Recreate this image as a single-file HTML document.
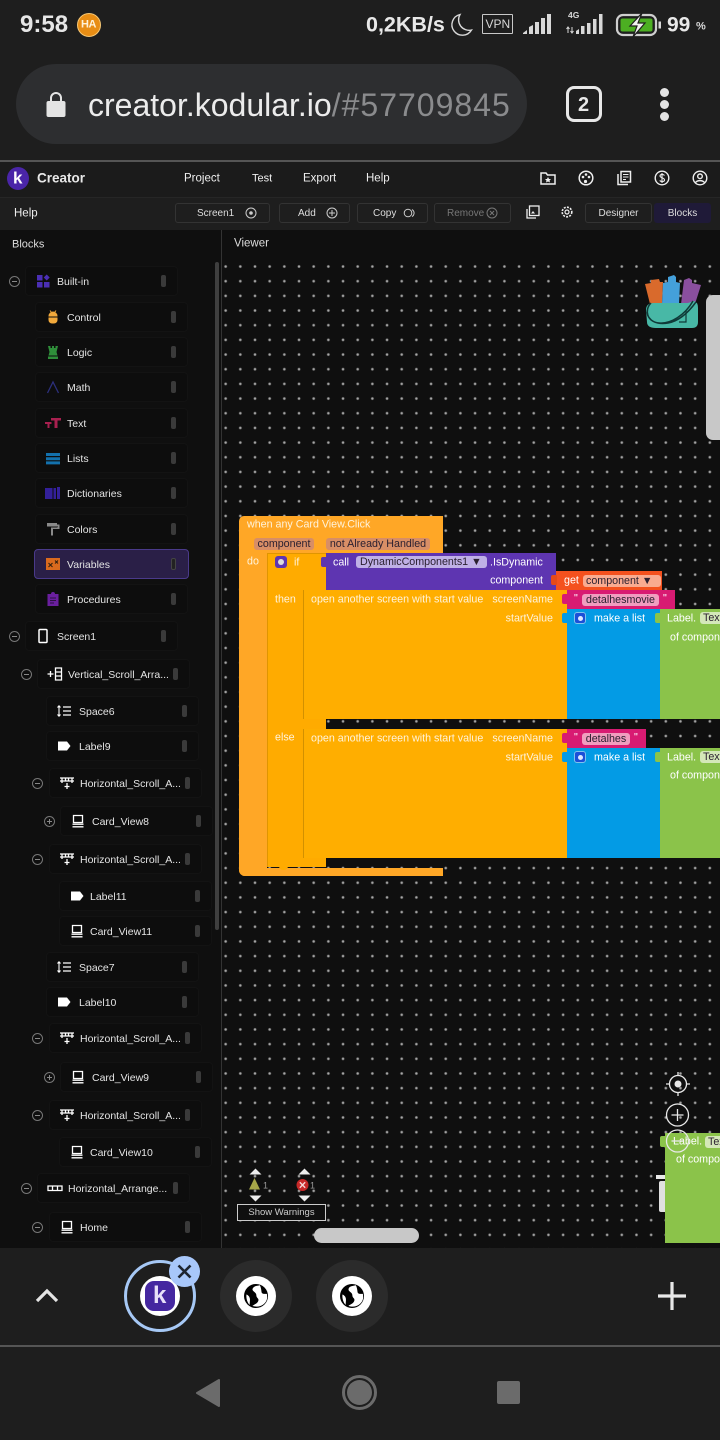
<!DOCTYPE html>
<html><head><meta charset="utf-8">
<style>
html,body{margin:0;padding:0;background:#1e1e1e}
#p{position:relative;width:720px;height:1440px;overflow:hidden;background:#1e1e1e;font-family:"Liberation Sans",sans-serif;color:#eee}
#p div,#p svg,#p span.a{position:absolute}
.t{white-space:nowrap;transform:translateY(-50%);line-height:1}
.m{margin-top:1px}
.r{height:30px;box-sizing:border-box;border:1px solid #131313;border-radius:4px;background:#0d0d0d;width:153px}
.r .n{position:absolute;left:31px;top:15px;transform:translateY(-50%);font-size:10.5px;color:#e4e4e4;white-space:nowrap;line-height:1}
.r .h{position:absolute;left:135px;top:8px;width:5px;height:12px;border-radius:2px;background:#3a3a3a}
.r svg{left:9px;top:6px;width:16px;height:16px}
.tg{width:11px;height:11px;box-sizing:border-box;border:1px solid #777;border-radius:50%}
.tg:before{content:"";position:absolute;left:2px;top:4px;width:5px;height:1px;background:#888}
.tg.pl:after{content:"";position:absolute;left:4px;top:2px;width:1px;height:5px;background:#888}
.bt{top:203px;height:20px;box-sizing:border-box;border:1px solid #333;border-radius:3px;font-size:10px;color:#ddd;line-height:20px}
.k{font-size:10.7px;color:#fff3dc;margin-top:1px}
.w{font-size:10.7px;color:#fff;margin-top:1px}
.f{height:12px;border-radius:3px;font-size:10.7px;line-height:12px;color:#2b2030;white-space:nowrap;overflow:hidden;text-align:center}
</style></head><body><div id="p">
<svg width="0" height="0" style="position:absolute"><defs>
<symbol id="lab" viewBox="0 0 16 16"><path d="M2 3.500h9l3.500 4.500-3.500 4.500H2z" fill="#fff"/></symbol>
<symbol id="card" viewBox="0 0 16 16"><path d="M3.500 2.500h9v7h-9z" fill="none" stroke="#fff" stroke-width="1.300"/><path d="M2.500 11.200h11M2.500 13.800h11" stroke="#fff" stroke-width="1.300"/></symbol>
<symbol id="hs" viewBox="0 0 16 16"><path d="M1 3h14M1 6h14M3 3v5M6.500 3v3M9.500 3v3M13 3v5" stroke="#fff" stroke-width="1.300" fill="none"/><path d="M8 8v6M5.500 11.500h5" stroke="#fff" stroke-width="1.300"/></symbol>
<symbol id="sp" viewBox="0 0 16 16"><path d="M3 3v10M1.500 4.500L3 2.800l1.500 1.700M1.500 11.500L3 13.200l1.500-1.700" stroke="#fff" stroke-width="1.100" fill="none"/><path d="M7 4h8M7 8h8M7 12h8" stroke="#fff" stroke-width="1.300"/></symbol>
</defs></svg>

<!-- status bar -->
<div class="t" style="left:20px;top:25px;font-size:24px;font-weight:bold;color:#e6e6e6">9:58</div>
<div style="left:77px;top:13px;width:24px;height:24px;border-radius:50%;background:#e88d14;border:1px solid #f6c774;box-sizing:border-box"></div>
<div class="t" style="left:81px;top:25px;font-size:11px;font-weight:bold;color:#fff2d8;letter-spacing:-.5px">HA</div>
<div class="t" style="left:366px;top:25px;font-size:21.5px;font-weight:bold;color:#e8e8e8">0,2KB/s</div>
<svg style="left:448px;top:12px" width="26" height="26" viewBox="0 0 26 26"><path d="M12 2.500A10.500 10.500 0 1 0 23.500 18 10.500 10.500 0 0 1 12 2.500z" fill="none" stroke="#d8d8d8" stroke-width="1.400"/></svg>
<div style="left:482px;top:14px;width:31px;height:20px;box-sizing:border-box;border:1.500px solid #c8c8c8;border-radius:1px"></div>
<div class="t" style="left:485.500px;top:24px;font-size:12px;color:#d8d8d8">VPN</div>
<svg style="left:522px;top:13px" width="30" height="22" viewBox="0 0 30 22"><path d="M1 20l4-3v4H1zM7 14l4-2v9H7zM13 9h4v12h-4zM19 5h4v16h-4zM25 1h4v20h-4z" fill="#d8d8d8"/></svg>
<div class="t" style="left:568px;top:15px;font-size:8.5px;font-weight:bold;color:#d8d8d8">4G</div>
<svg style="left:566px;top:13px" width="40" height="22" viewBox="0 0 40 22"><path d="M2 14v6M6 14v6M0.500 16L2 14l1.500 2M4.500 18L6 20l1.500-2" stroke="#d8d8d8" fill="none"/><path d="M10 21v-3l3-2v5zM15 21v-8h3.500v8zM21 21V10h3.500v11zM27 21V6h3.500v15zM33 21V1h3.500v20z" fill="#d8d8d8"/></svg>
<svg style="left:615px;top:13px" width="48" height="24" viewBox="0 0 48 24"><rect x="2" y="2" width="39" height="20" rx="6" fill="none" stroke="#cfcfcf" stroke-width="2.200"/><rect x="5.500" y="5.500" width="32" height="13" rx="2" fill="#4caf22"/><rect x="43.500" y="8.500" width="2.500" height="7" fill="#d8d8d8"/><path d="M27 0L15 13h7l-4 11 12-14h-7z" fill="#f2f2f2" stroke="#1e1e1e" stroke-width="1.200"/></svg>
<div class="t" style="left:667px;top:25px;font-size:21px;font-weight:bold;color:#e8e8e8">99</div>
<div class="t" style="left:696px;top:27px;font-size:11px;font-weight:bold;color:#d8d8d8">%</div>

<!-- url bar -->
<div style="left:16px;top:64px;width:511px;height:80px;border-radius:40px;background:#2d2e30"></div>
<svg style="left:44px;top:90px" width="24" height="28" viewBox="0 0 24 28"><path d="M7 13V8a5 5 0 0 1 10 0v5" fill="none" stroke="#e4e4e4" stroke-width="2"/><rect x="2.500" y="11" width="19" height="16" rx="2" fill="#e4e4e4"/></svg>
<div class="t" style="left:88px;top:105px;width:423px;overflow:hidden;font-size:32px;line-height:38px;color:#ececec">creator.kodular.io<span style="color:#8a8b8d;letter-spacing:1px">/#577098457</span></div>
<div style="left:566px;top:86px;width:36px;height:36px;box-sizing:border-box;border:3.5px solid #e8e8e8;border-radius:8px"></div>
<div class="t" style="left:578px;top:105px;font-size:20px;font-weight:bold;color:#e8e8e8">2</div>
<div style="left:659.500px;top:88px;width:9px;height:9px;border-radius:50%;background:#e4e4e4"></div>
<div style="left:659.500px;top:100px;width:9px;height:9px;border-radius:50%;background:#e4e4e4"></div>
<div style="left:659.500px;top:112px;width:9px;height:9px;border-radius:50%;background:#e4e4e4"></div>

<!-- kodular header -->
<div style="left:0;top:160px;width:720px;height:2px;background:#555"></div>
<div style="left:0;top:162px;width:720px;height:35px;background:#1b1b1b"></div>
<div style="left:7px;top:167px;width:22px;height:23px;border-radius:50%;background:#4a25a8"></div>
<div class="t" style="left:13px;top:178px;font-size:17px;font-weight:bold;color:#fff">k</div>
<div class="t" style="left:37px;top:178px;font-size:13.5px;font-weight:bold;color:#e8e8e8">Creator</div>
<div class="t m" style="left:184px;top:178px;font-size:11.5px">Project</div>
<div class="t m" style="left:252px;top:178px;font-size:11px">Test</div>
<div class="t m" style="left:303px;top:178px;font-size:11.5px">Export</div>
<div class="t m" style="left:366px;top:178px;font-size:11.5px">Help</div>
<svg style="left:540px;top:170px" width="16" height="16" viewBox="0 0 16 16"><path d="M1 3h5l1.500 2H15v9H1z" fill="none" stroke="#eee" stroke-width="1.500"/><path d="M8 7l1 2h2l-1.500 1.500.5 2-2-1-2 1 .5-2L5 9h2z" fill="#eee"/></svg>
<svg style="left:578px;top:170px" width="16" height="16" viewBox="0 0 16 16"><circle cx="8" cy="8" r="6.800" fill="none" stroke="#eee" stroke-width="1.500"/><circle cx="5" cy="7" r="1.300" fill="#eee"/><circle cx="8" cy="4.500" r="1.300" fill="#eee"/><circle cx="11" cy="7" r="1.300" fill="#eee"/><circle cx="7.500" cy="11.500" r="1.600" fill="#eee"/></svg>
<svg style="left:616px;top:170px" width="16" height="16" viewBox="0 0 16 16"><path d="M5 1.500h9.500v10.500H5z" fill="none" stroke="#eee" stroke-width="1.500"/><path d="M2 4v10.500h10" fill="none" stroke="#eee" stroke-width="1.500"/><path d="M7 4.500h5.500M7 7h5.500M7 9.500h3" stroke="#eee"/></svg>
<svg style="left:654px;top:170px" width="16" height="16" viewBox="0 0 16 16"><circle cx="8" cy="8" r="6.800" fill="none" stroke="#eee" stroke-width="1.400"/><path d="M10.500 5.500C9.500 4 6 4 6 6c0 2 4.500 1.500 4.500 4 0 2-3.500 2-4.800.5M8 3v10" fill="none" stroke="#eee" stroke-width="1.100"/></svg>
<svg style="left:692px;top:170px" width="16" height="16" viewBox="0 0 16 16"><circle cx="8" cy="8" r="6.800" fill="none" stroke="#eee" stroke-width="1.400"/><circle cx="8" cy="6.300" r="2.300" fill="none" stroke="#eee" stroke-width="1.400"/><path d="M3.500 12.500c2-2.500 7-2.500 9 0" fill="none" stroke="#eee" stroke-width="1.400"/></svg>

<!-- toolbar -->
<div style="left:0;top:197px;width:720px;height:33px;background:#1e1e1e;border-top:1px solid #262626;box-sizing:border-box"></div>
<div class="t m" style="left:14px;top:213px;font-size:11.5px">Help</div>
<div class="bt" style="left:175px;width:95px;padding-left:21px">Screen1</div>
<svg style="left:245px;top:207px" width="12" height="12" viewBox="0 0 12 12"><circle cx="6" cy="6" r="5" fill="none" stroke="#ccc"/><circle cx="6" cy="6" r="1.800" fill="#ccc"/></svg>
<div class="bt" style="left:279px;width:71px;padding-left:18px">Add</div>
<svg style="left:326px;top:207px" width="12" height="12" viewBox="0 0 12 12"><circle cx="6" cy="6" r="5" fill="none" stroke="#ccc"/><path d="M6 3v6M3 6h6" stroke="#ccc"/></svg>
<div class="bt" style="left:357px;width:71px;padding-left:15px">Copy</div>
<svg style="left:403px;top:207px" width="13" height="12" viewBox="0 0 13 12"><circle cx="5" cy="6" r="3.800" fill="none" stroke="#ccc"/><path d="M9 2.500a4 4 0 0 1 0 7" fill="none" stroke="#ccc"/></svg>
<div class="bt" style="left:434px;width:77px;padding-left:12px;color:#777">Remove</div>
<svg style="left:486px;top:207px" width="12" height="12" viewBox="0 0 12 12"><circle cx="6" cy="6" r="5" fill="none" stroke="#777"/><path d="M4 4l4 4M8 4l-4 4" stroke="#777"/></svg>
<svg style="left:526px;top:205px" width="14" height="14" viewBox="0 0 14 14"><rect x="3.500" y="1" width="9.500" height="9.500" fill="none" stroke="#eee" stroke-width="1.300"/><path d="M1 4v9h9" fill="none" stroke="#eee" stroke-width="1.300"/><path d="M5 8.500l2-2.500 2 2.500z" fill="#eee"/></svg>
<svg style="left:560px;top:205px" width="14" height="14" viewBox="0 0 14 14"><circle cx="7" cy="7" r="2" fill="none" stroke="#eee" stroke-width="1.200"/><circle cx="7" cy="7" r="4.800" fill="none" stroke="#eee" stroke-width="1.600" stroke-dasharray="2 1.200"/></svg>
<div class="bt" style="left:585px;width:67px;text-align:center">Designer</div>
<div class="bt" style="left:654px;width:57px;text-align:center;background:#1f1a38;border-color:#1f1a38">Blocks</div>

<!-- panel -->
<div style="left:0;top:230px;width:720px;height:1018px;background:#0f0f0f"></div>
<div style="left:221px;top:230px;width:1px;height:1018px;background:#333"></div>
<div class="t m" style="left:12px;top:244px;font-size:11px;color:#ddd">Blocks</div>
<div class="t" style="left:234px;top:244px;font-size:11.5px;color:#ddd">Viewer</div>
<div style="left:222px;top:256px;width:498px;height:992px;background-image:radial-gradient(circle at center,#b0b0b0 0,#a0a0a0 .8px,rgba(150,150,150,0) 1.8px);background-size:14.68px 14.68px;background-position:-3.7px 3.2px"></div>
<div style="left:215px;top:262px;width:4px;height:668px;border-radius:2px;background:#3f3f3f"></div>

<!-- sidebar rows -->
<div class="tg" style="left:8.500px;top:275.500px"></div>
<div class="r" style="left:25px;top:266px"><svg viewBox="0 0 16 16"><path d="M2 2h5.500v5.500H2zM2 9h5.500v5.500H2zM9 9h5.500v5.500H9zM11.700 1.500l3 3-3 3-3-3z" fill="#4b2fb5"/></svg><span class="n">Built-in</span><span class="h"></span></div>
<div class="r" style="left:35px;top:302px"><svg viewBox="0 0 16 16"><path d="M3.500 7a4.500 4.500 0 0 1 9 0v4a3.500 3.500 0 0 1-3.500 3.500H7A3.500 3.500 0 0 1 3.500 11z" fill="#f2a93b"/><path d="M5 1.500l1.500 2M11 1.500l-1.500 2" stroke="#f2a93b"/><path d="M3 8h10" stroke="#0e0e0e"/></svg><span class="n">Control</span><span class="h"></span></div>
<div class="r" style="left:35px;top:337px"><svg viewBox="0 0 16 16"><path d="M3 2h2.500v2h1.500V2h2v2h1.500V2H13l-1.500 6 1 3.500h-9l1-3.500zM3 12.500h10V15H3z" fill="#2f8f3a"/></svg><span class="n">Logic</span><span class="h"></span></div>
<div class="r" style="left:35px;top:372px"><svg viewBox="0 0 16 16"><path d="M2.500 14L8 3l5.500 11" fill="none" stroke="#2c2f7c" stroke-width="1.300"/></svg><span class="n">Math</span><span class="h"></span></div>
<div class="r" style="left:35px;top:408px"><svg viewBox="0 0 16 16"><path d="M6 3h10v2.500h-3.500V13h-3V5.500H6zM0 7h6.500v2H4.500v4h-2V9H0z" fill="#a8204f"/></svg><span class="n">Text</span><span class="h"></span></div>
<div class="r" style="left:35px;top:443px"><svg viewBox="0 0 16 16"><path d="M1 3h14v3H1zM1 7.200h14v3H1zM1 11.400h14v3H1z" fill="#1371ad"/></svg><span class="n">Lists</span><span class="h"></span></div>
<div class="r" style="left:35px;top:478px"><svg viewBox="0 0 16 16"><path d="M0 3h7.500v11H0zM8.500 3H11v11H8.500zM12 2l3 0v12h-3z" fill="#33209a"/></svg><span class="n">Dictionaries</span><span class="h"></span></div>
<div class="r" style="left:35px;top:514px"><svg viewBox="0 0 16 16"><path d="M2 2h10v3.500H2zM12 3.500h2.500V8H8v6.500H6V6.500h6.500V5H12z" fill="#8a8a8a"/></svg><span class="n">Colors</span><span class="h"></span></div>
<div class="r" style="left:34px;top:549px;width:155px;height:30px;background:#2a1f47;border-color:#4a3a8a"><svg viewBox="0 0 16 16" style="left:10px"><rect x="1" y="2" width="14" height="12" fill="#d96a1e"/><path d="M3.500 7l4 4M7.500 7l-4 4M10 4.500l3 3M13 4.500l-3 3" stroke="#33200f" stroke-width="1.100"/></svg><span class="n" style="left:32px">Variables</span><span class="h" style="left:136px;background:#222;border:1px solid #444;box-sizing:border-box"></span></div>
<div class="r" style="left:35px;top:584px"><svg viewBox="0 0 16 16"><path d="M2.500 3H6a2 2 0 0 1 4 0h3.500v12h-11z" fill="#6a1f9e"/><path d="M5 7h6M5 9.500h6M5 12h4" stroke="#2b1040" stroke-width=".9"/></svg><span class="n">Procedures</span><span class="h"></span></div>

<div class="tg" style="left:8.500px;top:630.500px"></div>
<div class="r" style="left:25px;top:621px"><svg viewBox="0 0 16 16"><rect x="4" y="1.500" width="8" height="13" rx="1" fill="none" stroke="#fff" stroke-width="1.500"/></svg><span class="n">Screen1</span><span class="h"></span></div>
<div class="tg" style="left:20.500px;top:668.500px"></div>
<div class="r" style="left:37px;top:659px"><svg viewBox="0 0 16 16"><path d="M0.500 8h6M3.500 5v6" stroke="#fff" stroke-width="1.300"/><path d="M8.500 2h6v12h-6zM8.500 6h6M8.500 10h6" fill="none" stroke="#fff" stroke-width="1.300"/></svg><span class="n" style="left:30px">Vertical_Scroll_Arra...</span><span class="h"></span></div>
<div class="r" style="left:46px;top:696px"><svg><use href="#sp"/></svg><span class="n" style="left:32px">Space6</span><span class="h"></span></div>
<div class="r" style="left:46px;top:731px"><svg><use href="#lab"/></svg><span class="n" style="left:32px">Label9</span><span class="h"></span></div>
<div class="tg" style="left:31.500px;top:777.500px"></div>
<div class="r" style="left:49px;top:768px"><svg><use href="#hs"/></svg><span class="n" style="left:30px">Horizontal_Scroll_A...</span><span class="h"></span></div>
<div class="tg pl" style="left:43.500px;top:815.500px"></div>
<div class="r" style="left:60px;top:806px"><svg><use href="#card"/></svg><span class="n">Card_View8</span><span class="h"></span></div>
<div class="tg" style="left:31.500px;top:853.500px"></div>
<div class="r" style="left:49px;top:844px"><svg><use href="#hs"/></svg><span class="n" style="left:30px">Horizontal_Scroll_A...</span><span class="h"></span></div>
<div class="r" style="left:59px;top:881px"><svg><use href="#lab"/></svg><span class="n" style="left:30px">Label11</span><span class="h"></span></div>
<div class="r" style="left:59px;top:916px"><svg><use href="#card"/></svg><span class="n" style="left:30px">Card_View11</span><span class="h"></span></div>
<div class="r" style="left:46px;top:952px"><svg><use href="#sp"/></svg><span class="n" style="left:32px">Space7</span><span class="h"></span></div>
<div class="r" style="left:46px;top:987px"><svg><use href="#lab"/></svg><span class="n" style="left:32px">Label10</span><span class="h"></span></div>
<div class="tg" style="left:31.500px;top:1032.500px"></div>
<div class="r" style="left:49px;top:1023px"><svg><use href="#hs"/></svg><span class="n" style="left:30px">Horizontal_Scroll_A...</span><span class="h"></span></div>
<div class="tg pl" style="left:43.500px;top:1071.500px"></div>
<div class="r" style="left:60px;top:1062px"><svg><use href="#card"/></svg><span class="n">Card_View9</span><span class="h"></span></div>
<div class="tg" style="left:31.500px;top:1109.500px"></div>
<div class="r" style="left:49px;top:1100px"><svg><use href="#hs"/></svg><span class="n" style="left:30px">Horizontal_Scroll_A...</span><span class="h"></span></div>
<div class="r" style="left:59px;top:1137px"><svg><use href="#card"/></svg><span class="n" style="left:30px">Card_View10</span><span class="h"></span></div>
<div class="tg" style="left:20.500px;top:1182.500px"></div>
<div class="r" style="left:37px;top:1173px"><svg viewBox="0 0 16 16"><path d="M1 6h14v4.500H1zM5.500 6v4.500M10.500 6v4.500" fill="none" stroke="#fff" stroke-width="1.300"/></svg><span class="n" style="left:30px">Horizontal_Arrange...</span><span class="h"></span></div>
<div class="tg" style="left:31.500px;top:1221.500px"></div>
<div class="r" style="left:49px;top:1212px"><svg><use href="#card"/></svg><span class="n" style="left:30px">Home</span><span class="h"></span></div>

<!-- blocks -->
<div style="left:239px;top:516px;width:204px;height:37px;background:#ffa726;border-radius:5px 0 0 0"></div>
<div style="left:239px;top:553px;width:28px;height:323px;background:#ffa726;border-radius:0 0 0 6px"></div>
<div style="left:239px;top:868px;width:204px;height:8px;background:#ffa726;border-radius:0 0 0 6px"></div>
<div style="left:267px;top:553px;width:59px;height:37px;background:#ffab00;border-left:1px solid #e09500;border-top:1px solid #e09500;box-sizing:border-box"></div>
<div style="left:267px;top:590px;width:36px;height:277px;background:#ffab00;border-left:1px solid #e09500;box-sizing:border-box"></div>
<div style="left:267px;top:858px;width:59px;height:9px;background:#ffab00;border-left:1px solid #e09500;box-sizing:border-box"></div>
<div style="left:279px;top:866px;width:9px;height:4px;background:#ffab00;border-radius:0 0 4px 4px"></div>
<div style="left:303px;top:719px;width:23px;height:10px;background:#ffab00"></div>
<div style="left:303px;top:590px;width:264px;height:129px;background:#ffae00;border-left:1px solid #d29000;box-sizing:border-box"></div>
<div style="left:303px;top:729px;width:264px;height:129px;background:#ffae00;border-left:1px solid #d29000;box-sizing:border-box"></div>
<div style="left:326px;top:553px;width:230px;height:37px;background:#5e35b1"></div>
<div style="left:321px;top:557px;width:6px;height:10px;background:#5e35b1;border-radius:2px 0 0 2px"></div>
<div style="left:556px;top:571px;width:106px;height:19px;background:#f4511e"></div>
<div style="left:551px;top:575px;width:6px;height:10px;background:#e64a19;border-radius:2px 0 0 2px"></div>
<div style="left:567px;top:590px;width:108px;height:19px;background:#d81b72"></div>
<div style="left:562px;top:594px;width:6px;height:10px;background:#d81b72;border-radius:2px 0 0 2px"></div>
<div style="left:567px;top:609px;width:93px;height:110px;background:#039be5"></div>
<div style="left:562px;top:613px;width:6px;height:10px;background:#039be5;border-radius:2px 0 0 2px"></div>
<div style="left:660px;top:609px;width:60px;height:110px;background:#8bc34a"></div>
<div style="left:655px;top:613px;width:6px;height:10px;background:#8bc34a;border-radius:2px 0 0 2px"></div>
<div style="left:567px;top:729px;width:79px;height:19px;background:#d81b72"></div>
<div style="left:562px;top:733px;width:6px;height:10px;background:#d81b72;border-radius:2px 0 0 2px"></div>
<div style="left:567px;top:748px;width:93px;height:110px;background:#039be5"></div>
<div style="left:562px;top:752px;width:6px;height:10px;background:#039be5;border-radius:2px 0 0 2px"></div>
<div style="left:660px;top:748px;width:60px;height:110px;background:#8bc34a"></div>
<div style="left:655px;top:752px;width:6px;height:10px;background:#8bc34a;border-radius:2px 0 0 2px"></div>

<div class="t k" style="left:247px;top:524px">when any Card View.Click</div>
<div class="f" style="left:254px;top:537.500px;width:60px;background:#d88e66">component</div>
<div class="f" style="left:326px;top:537.500px;width:104px;background:#d88e66">not Already Handled</div>
<div class="t k" style="left:247px;top:561px">do</div>
<div style="left:275px;top:556px;width:12px;height:12px;background:#5e35b1;border-radius:3px"></div>
<div style="left:278px;top:559px;width:6px;height:6px;border-radius:50%;background:#ddd"></div>
<div class="t k" style="left:294px;top:562px">if</div>
<div class="t w" style="left:333px;top:562px">call</div>
<div class="f" style="left:356px;top:556px;width:131px;background:#bfb0e6;text-align:left;padding-left:4px;box-sizing:border-box">DynamicComponents1 ▼</div>
<div class="t w" style="left:490px;top:562px">.IsDynamic</div>
<div class="t w" style="right:177px;top:580px">component</div>
<div class="t w" style="left:564px;top:580px">get</div>
<div class="f" style="left:583px;top:575px;width:78px;background:#f9ab90;text-align:left;padding-left:3px;box-sizing:border-box">component ▼</div>
<div class="t k" style="left:275px;top:599px">then</div>
<div class="t k" style="left:311px;top:599px">open another screen with start value</div>
<div class="t k" style="right:167px;top:599px">screenName</div>
<div class="t k" style="right:167px;top:618px">startValue</div>
<div class="t w" style="left:574px;top:598px">"</div>
<div class="f" style="left:582px;top:593.500px;width:77px;background:#f09dbf">detalhesmovie</div>
<div class="t w" style="left:663px;top:598px">"</div>
<div style="left:574px;top:612px;width:12px;height:12px;background:#1a4fd8;border-radius:3px;border:1px solid #7fc2ee;box-sizing:border-box"></div>
<div style="left:577.500px;top:615.500px;width:5px;height:5px;border-radius:50%;background:#dbe8ff"></div>
<div class="t w" style="left:594px;top:618px">make a list</div>
<div class="t w" style="left:667px;top:618px">Label.</div>
<div class="f" style="left:700px;top:612px;width:30px;background:#d4e8b8;text-align:left;padding-left:3px;box-sizing:border-box">Text</div>
<div class="t w" style="left:670px;top:637px">of component</div>

<div class="t k" style="left:275px;top:737px">else</div>
<div class="t k" style="left:311px;top:738px">open another screen with start value</div>
<div class="t k" style="right:167px;top:738px">screenName</div>
<div class="t k" style="right:167px;top:757px">startValue</div>
<div class="t w" style="left:574px;top:737px">"</div>
<div class="f" style="left:582px;top:732.500px;width:48px;background:#f09dbf">detalhes</div>
<div class="t w" style="left:634px;top:737px">"</div>
<div style="left:574px;top:751px;width:12px;height:12px;background:#1a4fd8;border-radius:3px;border:1px solid #7fc2ee;box-sizing:border-box"></div>
<div style="left:577.500px;top:754.500px;width:5px;height:5px;border-radius:50%;background:#dbe8ff"></div>
<div class="t w" style="left:594px;top:757px">make a list</div>
<div class="t w" style="left:667px;top:757px">Label.</div>
<div class="f" style="left:700px;top:751px;width:30px;background:#d4e8b8;text-align:left;padding-left:3px;box-sizing:border-box">Text</div>
<div class="t w" style="left:670px;top:775px">of component</div>

<!-- bag -->
<svg style="left:643px;top:272px" width="60" height="58" viewBox="0 0 60 58">
<path d="M2 12l6-1 0-3 8-1 1 3 3 0-1 22H7z" fill="#d96a2c"/>
<path d="M20 11l5-1 0-5 6-2 2 2 0 5 4 1-1 21H19z" fill="#44a0da"/>
<path d="M38 32l3-24 5-2 3 2 0 3 9 2-6 19z" fill="#8a4f9e"/>
<path d="M3 38q0-7 8-7h34l6-2q4 1 4 7v14q0 6-6 6H13Q4 56 4 50z" fill="#48b8a6"/>
<path d="M4 40c1 9 10 13 21 11 11-2 20-10 28-21M8 31c-7 7-4 19 8 20 12 1 26-8 34-22" fill="none" stroke="#0f3a38" stroke-width="1.500"/>
<path d="M43 39v11h-7" fill="none" stroke="#0f3a38" stroke-width="1.200"/>
</svg>

<!-- scrollbars -->
<div style="left:706px;top:295px;width:14px;height:145px;background:#c8c8c8;border-radius:7px 0 0 7px"></div>
<div style="left:314px;top:1228px;width:105px;height:15px;background:#c8c8c8;border-radius:7.5px"></div>

<!-- zoom controls / trash -->
<div style="left:656px;top:1175px;width:20px;height:4px;background:#e8e8e8"></div>
<div style="left:659px;top:1181px;width:14px;height:31px;background:#e0e0e0;border-radius:2px"></div>
<div style="left:665px;top:1133px;width:55px;height:110px;background:#8bc34a"></div>
<div style="left:660px;top:1136px;width:6px;height:11px;background:#8bc34a;border-radius:2px 0 0 2px"></div>
<div class="t w" style="left:673px;top:1141px">Label.</div>
<div class="f" style="left:705px;top:1136px;width:25px;background:#d4e8b8;text-align:left;padding-left:3px;box-sizing:border-box">Text</div>
<div class="t w" style="left:676px;top:1159px">of component</div>
<svg style="left:660px;top:1068px" width="36" height="90" viewBox="0 0 36 90">
<circle cx="18" cy="16" r="8.500" fill="none" stroke="#e8e8e8" stroke-width="1.300"/><circle cx="18" cy="16" r="3.500" fill="#e8e8e8"/><path d="M18 4v3.500M18 24.500V28M6 16h3.500M26.500 16H30" stroke="#e8e8e8" stroke-width="1.300"/>
<circle cx="17.500" cy="47" r="11" fill="none" stroke="#e8e8e8" stroke-width="1.300"/><path d="M17.500 41v12M11.500 47h12" stroke="#e8e8e8" stroke-width="1.300"/>
<circle cx="17.500" cy="73" r="11" fill="none" stroke="#e8e8e8" stroke-width="1.300"/><path d="M11.500 73h12" stroke="#e8e8e8" stroke-width="1.300"/>
</svg>

<!-- warnings -->
<svg style="left:245px;top:1167px" width="70" height="36" viewBox="0 0 70 36">
<path d="M4.500 7.500L10.500 1.500l6 6zM4.500 28.500h12l-6 6zM53.500 7.500l6-6 6 6zM53.500 28.500h12l-6 6z" fill="#eee"/>
<path d="M9.500 11l5.500 11.500H4z" fill="#a6a648"/>
<circle cx="57.500" cy="18" r="6" fill="#c62828"/><path d="M54.800 15.300l5.400 5.400M60.200 15.300l-5.400 5.400" stroke="#f4d6d6" stroke-width="1.400"/>
</svg>
<div class="t" style="left:263px;top:1186px;font-size:9px;color:#999">1</div>
<div class="t" style="left:310px;top:1186px;font-size:9px;color:#999">1</div>
<div style="left:237px;top:1204px;width:89px;height:17px;box-sizing:border-box;border:1px solid #ccc;background:#0f0f0f;font-size:9.5px;line-height:15px;text-align:center;color:#ccc">Show Warnings</div>

<!-- tab bar -->
<div style="left:0;top:1248px;width:720px;height:97px;background:#1e1e1e"></div>
<svg style="left:34px;top:1285px" width="26" height="20" viewBox="0 0 26 20"><path d="M3 16L13 6l10 10" fill="none" stroke="#e4e4e4" stroke-width="3.200"/></svg>
<div style="left:124px;top:1260px;width:72px;height:72px;box-sizing:border-box;border:3px solid #a6c8f5;border-radius:50%"></div>
<div style="left:140px;top:1276px;width:40px;height:40px;border-radius:50%;background:#fff"></div>
<div style="left:145px;top:1281px;width:30px;height:30px;border-radius:9px;background:#4527a0"></div>
<div class="t" style="left:153px;top:1296px;font-size:24px;font-weight:bold;color:#e8e0f8">k</div>
<div style="left:169px;top:1256px;width:31px;height:31px;border-radius:50%;background:#a8c7fa"></div>
<svg style="left:175px;top:1262px" width="19" height="19" viewBox="0 0 19 19"><path d="M3.500 3.500l12 12M15.500 3.500l-12 12" stroke="#1e2530" stroke-width="2.600"/></svg>
<div style="left:220px;top:1260px;width:72px;height:72px;border-radius:50%;background:#2b2b2b"></div>
<div style="left:236px;top:1276px;width:40px;height:40px;border-radius:50%;background:#fff"></div>
<svg style="left:243px;top:1283px" width="26" height="26" viewBox="0 0 26 26"><circle cx="13" cy="13" r="12" fill="#000"/><path d="M13 1c-3 2-6 3-6 6 0 3 5 2 6 5s4 2 4 5c0 3-2 4-4 7 7 0 12-5 12-11 0-2-1-4-2-6-3 1-5 2-6 0-1-2-2-4-4-6zM3 15c2 0 4 1 5 3 1 2 1 4 2 6-3-1-6-5-7-9z" fill="#fff" transform="rotate(20 13 13) scale(.95) translate(.7 .7)"/></svg>
<div style="left:316px;top:1260px;width:72px;height:72px;border-radius:50%;background:#2b2b2b"></div>
<div style="left:332px;top:1276px;width:40px;height:40px;border-radius:50%;background:#fff"></div>
<svg style="left:339px;top:1283px" width="26" height="26" viewBox="0 0 26 26"><circle cx="13" cy="13" r="12" fill="#000"/><path d="M13 1c-3 2-6 3-6 6 0 3 5 2 6 5s4 2 4 5c0 3-2 4-4 7 7 0 12-5 12-11 0-2-1-4-2-6-3 1-5 2-6 0-1-2-2-4-4-6zM3 15c2 0 4 1 5 3 1 2 1 4 2 6-3-1-6-5-7-9z" fill="#fff" transform="rotate(20 13 13) scale(.95) translate(.7 .7)"/></svg>
<svg style="left:656px;top:1280px" width="32" height="32" viewBox="0 0 32 32"><path d="M16 2v28M2 16h28" stroke="#e8e8e8" stroke-width="3.200"/></svg>

<!-- nav -->
<div style="left:0;top:1345px;width:720px;height:2px;background:#555"></div>
<svg style="left:194px;top:1377px" width="28" height="32" viewBox="0 0 28 32"><path d="M25 3v26L3 16z" fill="#6b6b6b" stroke="#6b6b6b" stroke-linejoin="round" stroke-width="2"/></svg>
<div style="left:342px;top:1375px;width:35px;height:35px;box-sizing:border-box;border:3px solid #6b6b6b;border-radius:50%"></div>
<div style="left:347px;top:1380px;width:25px;height:25px;border-radius:50%;background:#6b6b6b"></div>
<div style="left:497px;top:1381px;width:23px;height:23px;border-radius:2px;background:#6b6b6b"></div>
</div></body></html>
